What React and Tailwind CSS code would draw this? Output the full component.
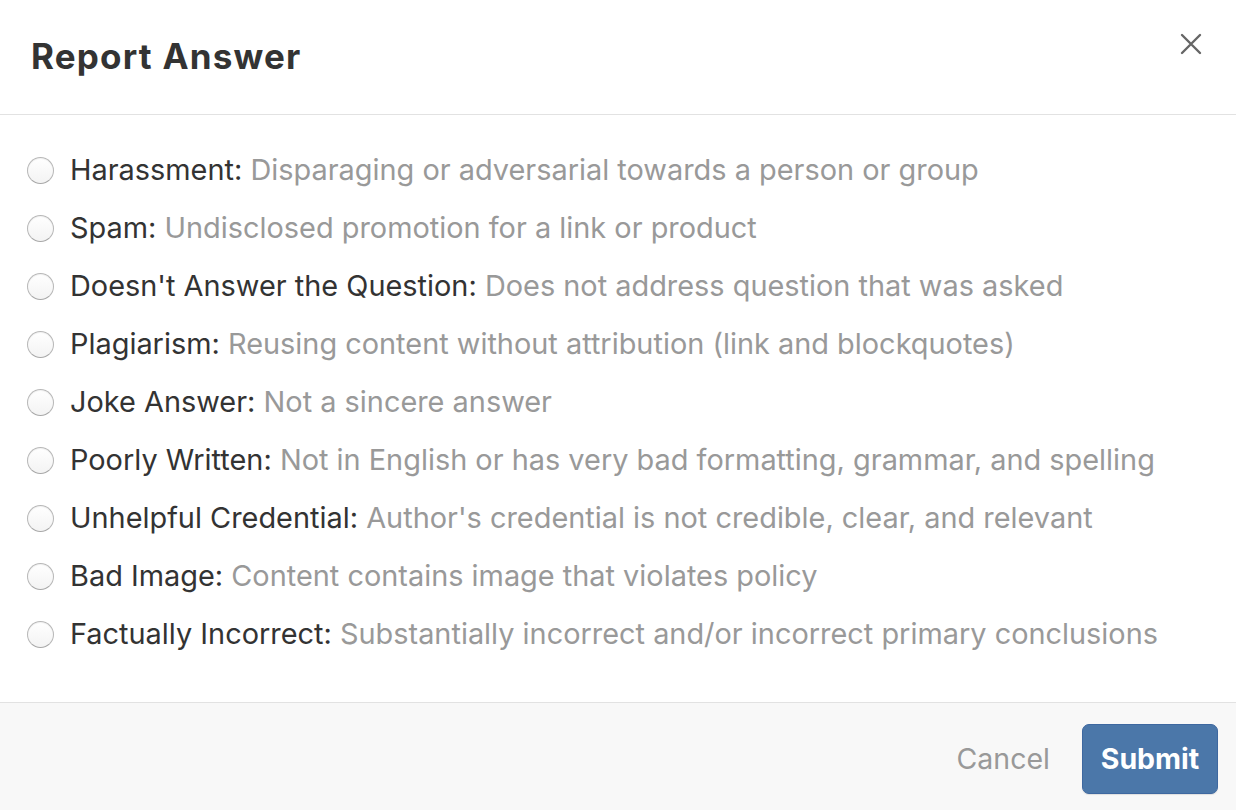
import React from "react";

const items = [
  ["Harassment:", "Disparaging or adversarial towards a person or group"],
  ["Spam:", "Undisclosed promotion for a link or product"],
  ["Doesn't Answer the Question:", "Does not address question that was asked"],
  ["Plagiarism:", "Reusing content without attribution (link and blockquotes)"],
  ["Joke Answer:", "Not a sincere answer"],
  ["Poorly Written:", "Not in English or has very bad formatting, grammar, and spelling"],
  ["Unhelpful Credential:", "Author's credential is not credible, clear, and relevant"],
  ["Bad Image:", "Content contains image that violates policy"],
  ["Factually Incorrect:", "Substantially incorrect and/or incorrect primary conclusions"],
];

export default function App() {
  return (
    <div
      className="w-[1236px] h-[810px] bg-white flex flex-col overflow-hidden"
      style={{ fontFamily: 'Inter, "Liberation Sans", Arial, sans-serif' }}
    >
      <div className="h-[115px] shrink-0 border-b border-[#e2e2e2] flex items-start justify-between pl-[31px] pr-[34px]">
        <h1 className="mt-[35px] text-[35px] leading-[42px] font-bold tracking-[1.2px] text-[#333333]">Report Answer</h1>
        <button className="mt-[33px] w-[22px] h-[22px] flex items-center justify-center">
          <svg width="22" height="22" viewBox="0 0 22 22">
            <path d="M2 2 L20 20 M20 2 L2 20" stroke="#666666" strokeWidth="2.4" strokeLinecap="round" />
          </svg>
        </button>
      </div>
      <div className="flex-1 pt-[26px] pl-[27px]">
        {items.map(([a, b]) => (
          <label key={a} className="h-[58px] flex items-center">
            <span className="w-[27px] h-[27px] rounded-full border border-[#b8b8b8] border-b-[#a8a8a8] bg-gradient-to-b from-white to-[#f3f3f3] shadow-[inset_0_1px_1px_rgba(0,0,0,0.06)] shrink-0" />
            <span className="ml-[16px] text-[28.9px] leading-[34px] whitespace-nowrap">
              <span className="text-[#333333]">{a}</span>{" "}
              <span className="text-[#999999]">{b}</span>
            </span>
          </label>
        ))}
      </div>
      <div className="h-[108px] shrink-0 border-t border-[#e2e2e2] bg-[#f8f8f8] flex items-center justify-end pr-[18px] pt-[5px]">
        <span className="text-[28.5px] text-[#999999] mr-[32px]">Cancel</span>
        <button className="w-[136px] h-[70px] rounded-[7px] bg-[#4b77a9] border border-[#3e68a0] text-white text-[28.5px] font-bold shadow-[0_1px_1px_rgba(0,0,0,0.1)]">
          Submit
        </button>
      </div>
    </div>
  );
}
